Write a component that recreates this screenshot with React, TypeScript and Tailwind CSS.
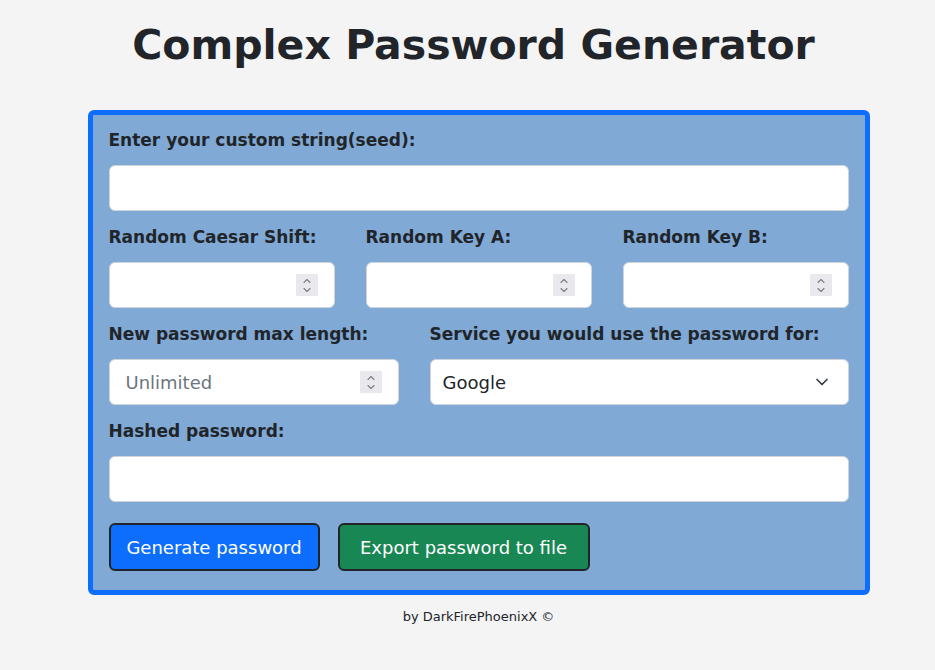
import { ChevronDown, ChevronUp } from 'lucide-react'

const FONT = "font-['Comic_Sans_MS','DejaVu_Sans',sans-serif]"

function Spinner() {
  return (
    <div className="absolute right-[17px] top-1/2 -translate-y-1/2 w-[22px] h-[22px] bg-[#e9e9ed] flex flex-col items-center justify-center text-[#7d7d86]">
      <ChevronUp className="w-3 h-3 -mb-[3px]" strokeWidth={2.25} />
      <ChevronDown className="w-3 h-3" strokeWidth={2.25} />
    </div>
  )
}

function Label({ children }: { children: React.ReactNode }) {
  return (
    <label className="block h-6 leading-6 mb-[13px] text-[17px] font-bold text-[#212529] whitespace-nowrap">
      {children}
    </label>
  )
}

function NumberField({ placeholder }: { placeholder?: string }) {
  return (
    <div className="relative">
      <input
        type="text"
        placeholder={placeholder}
        className="w-full h-[46px] rounded-md bg-white border border-[#ced4da] px-4 text-[18px] text-[#212529] placeholder:text-[#6c757d] outline-none"
      />
      <Spinner />
    </div>
  )
}

export default function App() {
  return (
    <div className={`min-h-[670px] bg-[#f4f4f4] pl-[22px] ${FONT} text-[#212529]`}>
      <h1 className="pt-[14px] pr-[10px] h-[76px] leading-[62px] text-center text-[41px] font-bold mb-[34px]">
        Complex Password Generator
      </h1>

      <div className="mx-auto w-[782px] border-[5px] border-[#0d6efd] rounded-md bg-[#80a9d6] px-4 pt-[13px] pb-[19px]">
        {/* seed */}
        <div className="mb-[14px]">
          <Label>Enter your custom string(seed):</Label>
          <input className="w-full h-[46px] rounded-md bg-white border border-[#ced4da] px-4 text-[18px] outline-none" />
        </div>

        {/* shift + keys */}
        <div className="grid grid-cols-3 gap-x-[31px] mb-[14px]">
          <div>
            <Label>Random Caesar Shift:</Label>
            <NumberField />
          </div>
          <div>
            <Label>Random Key A:</Label>
            <NumberField />
          </div>
          <div>
            <Label>Random Key B:</Label>
            <NumberField />
          </div>
        </div>

        {/* length + service */}
        <div className="flex gap-x-[31px] mb-[14px]">
          <div className="w-[290px]">
            <Label>New password max length:</Label>
            <NumberField placeholder="Unlimited" />
          </div>
          <div className="flex-1">
            <Label>Service you would use the password for:</Label>
            <div className="relative">
              <select className="w-full h-[46px] appearance-none rounded-md bg-white border border-[#ced4da] pl-3 text-[18px] text-[#212529] outline-none">
                <option>Google</option>
              </select>
              <ChevronDown className="absolute right-[17px] top-1/2 -translate-y-1/2 w-5 h-5 text-[#343a40]" strokeWidth={2} />
            </div>
          </div>
        </div>

        {/* hashed */}
        <div className="mb-[21px]">
          <Label>Hashed password:</Label>
          <input className="w-full h-[46px] rounded-md bg-white border border-[#ced4da] px-4 text-[18px] outline-none" />
        </div>

        <div className="flex gap-[18px]">
          <button className="h-12 w-[211px] rounded-md border-2 border-[#212529] bg-[#0d6efd] text-white text-[18px] whitespace-nowrap">
            Generate password
          </button>
          <button className="h-12 w-[252px] rounded-md border-2 border-[#212529] bg-[#198754] text-white text-[18px] whitespace-nowrap">
            Export password to file
          </button>
        </div>
      </div>

      <p className="mt-3 text-center text-[13px] leading-5">by DarkFirePhoenixX ©</p>
    </div>
  )
}
